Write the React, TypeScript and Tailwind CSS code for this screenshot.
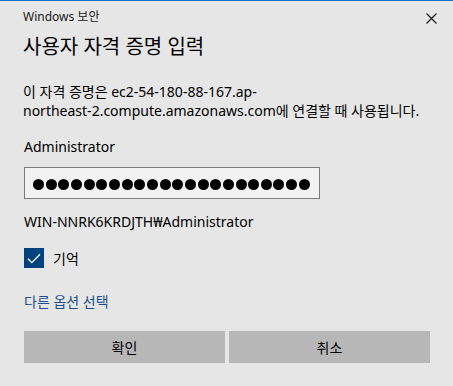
const font = { fontFamily: '"Noto Sans", "Noto Sans CJK KR", sans-serif' };

const dots = Array.from({ length: 22 });

export default function App() {
  return (
    <div
      className="w-[453px] h-[386px] bg-[#e6e6e6] border-t border-[#1a72cc] text-black overflow-hidden"
      style={font}
    >
      <div className="pl-[23px] pr-[23px]">
        {/* Title bar */}
        <div className="flex items-center justify-between mt-[8px] h-[16px]">
          <span className="text-[12px] leading-[16px] text-[#1a1a1a]">Windows 보안</span>
          <svg width="11" height="11" viewBox="0 0 11 11" className="mr-[-7px] mt-[2px]">
            <path d="M0.5 0.5 L10.5 10.5 M10.5 0.5 L0.5 10.5" stroke="#111" strokeWidth="1.1" />
          </svg>
        </div>

        <h1 className="mt-[8px] text-[20px] leading-[28px] font-normal">사용자 자격 증명 입력</h1>

        <p className="mt-[21px] text-[14px] leading-[19px]">
          이 자격 증명은 ec2-54-180-88-167.ap-
          <br />
          northeast-2.compute.amazonaws.com에 연결할 때 사용됩니다.
        </p>

        <div className="mt-[17px] text-[14px] leading-[19px] pl-[1px]">Administrator</div>

        {/* Password field */}
        <div className="mt-[11px] ml-[1px] w-[296px] h-[32px] bg-[#f2f2f2] border border-[#7a7a7a] flex items-center pl-[8px]">
          <div className="flex gap-[1.67px] mt-[2px]">
            {dots.map((_, i) => (
              <div key={i} className="w-[11px] h-[11px] rounded-full bg-black" />
            ))}
          </div>
        </div>

        <div className="mt-[13px] text-[14px] leading-[19px] pl-[1px]">WIN-NNRK6KRDJTH₩Administrator</div>

        {/* Remember checkbox */}
        <div className="mt-[17px] flex items-center gap-[9px] pl-[1px]">
          <div className="w-[20px] h-[20px] bg-[#00427e] flex items-center justify-center">
            <svg width="14" height="11" viewBox="0 0 14 11">
              <path d="M1 5.8 L4.8 9.6 L13 1.2" stroke="#fff" strokeWidth="1.3" fill="none" />
            </svg>
          </div>
          <span className="text-[14px] leading-[19px]">기억</span>
        </div>

        <div className="mt-[24px] text-[14px] leading-[19px] text-[#1c4e8e] pl-[1px]">다른 옵션 선택</div>

        {/* Buttons */}
        <div className="mt-[20px] ml-[1px] flex gap-[4px] w-[406px]">
          <button className="flex-1 h-[32px] bg-[#b7b7b7] text-[14px] text-black">확인</button>
          <button className="flex-1 h-[32px] bg-[#b7b7b7] text-[14px] text-black">취소</button>
        </div>
      </div>
    </div>
  );
}
